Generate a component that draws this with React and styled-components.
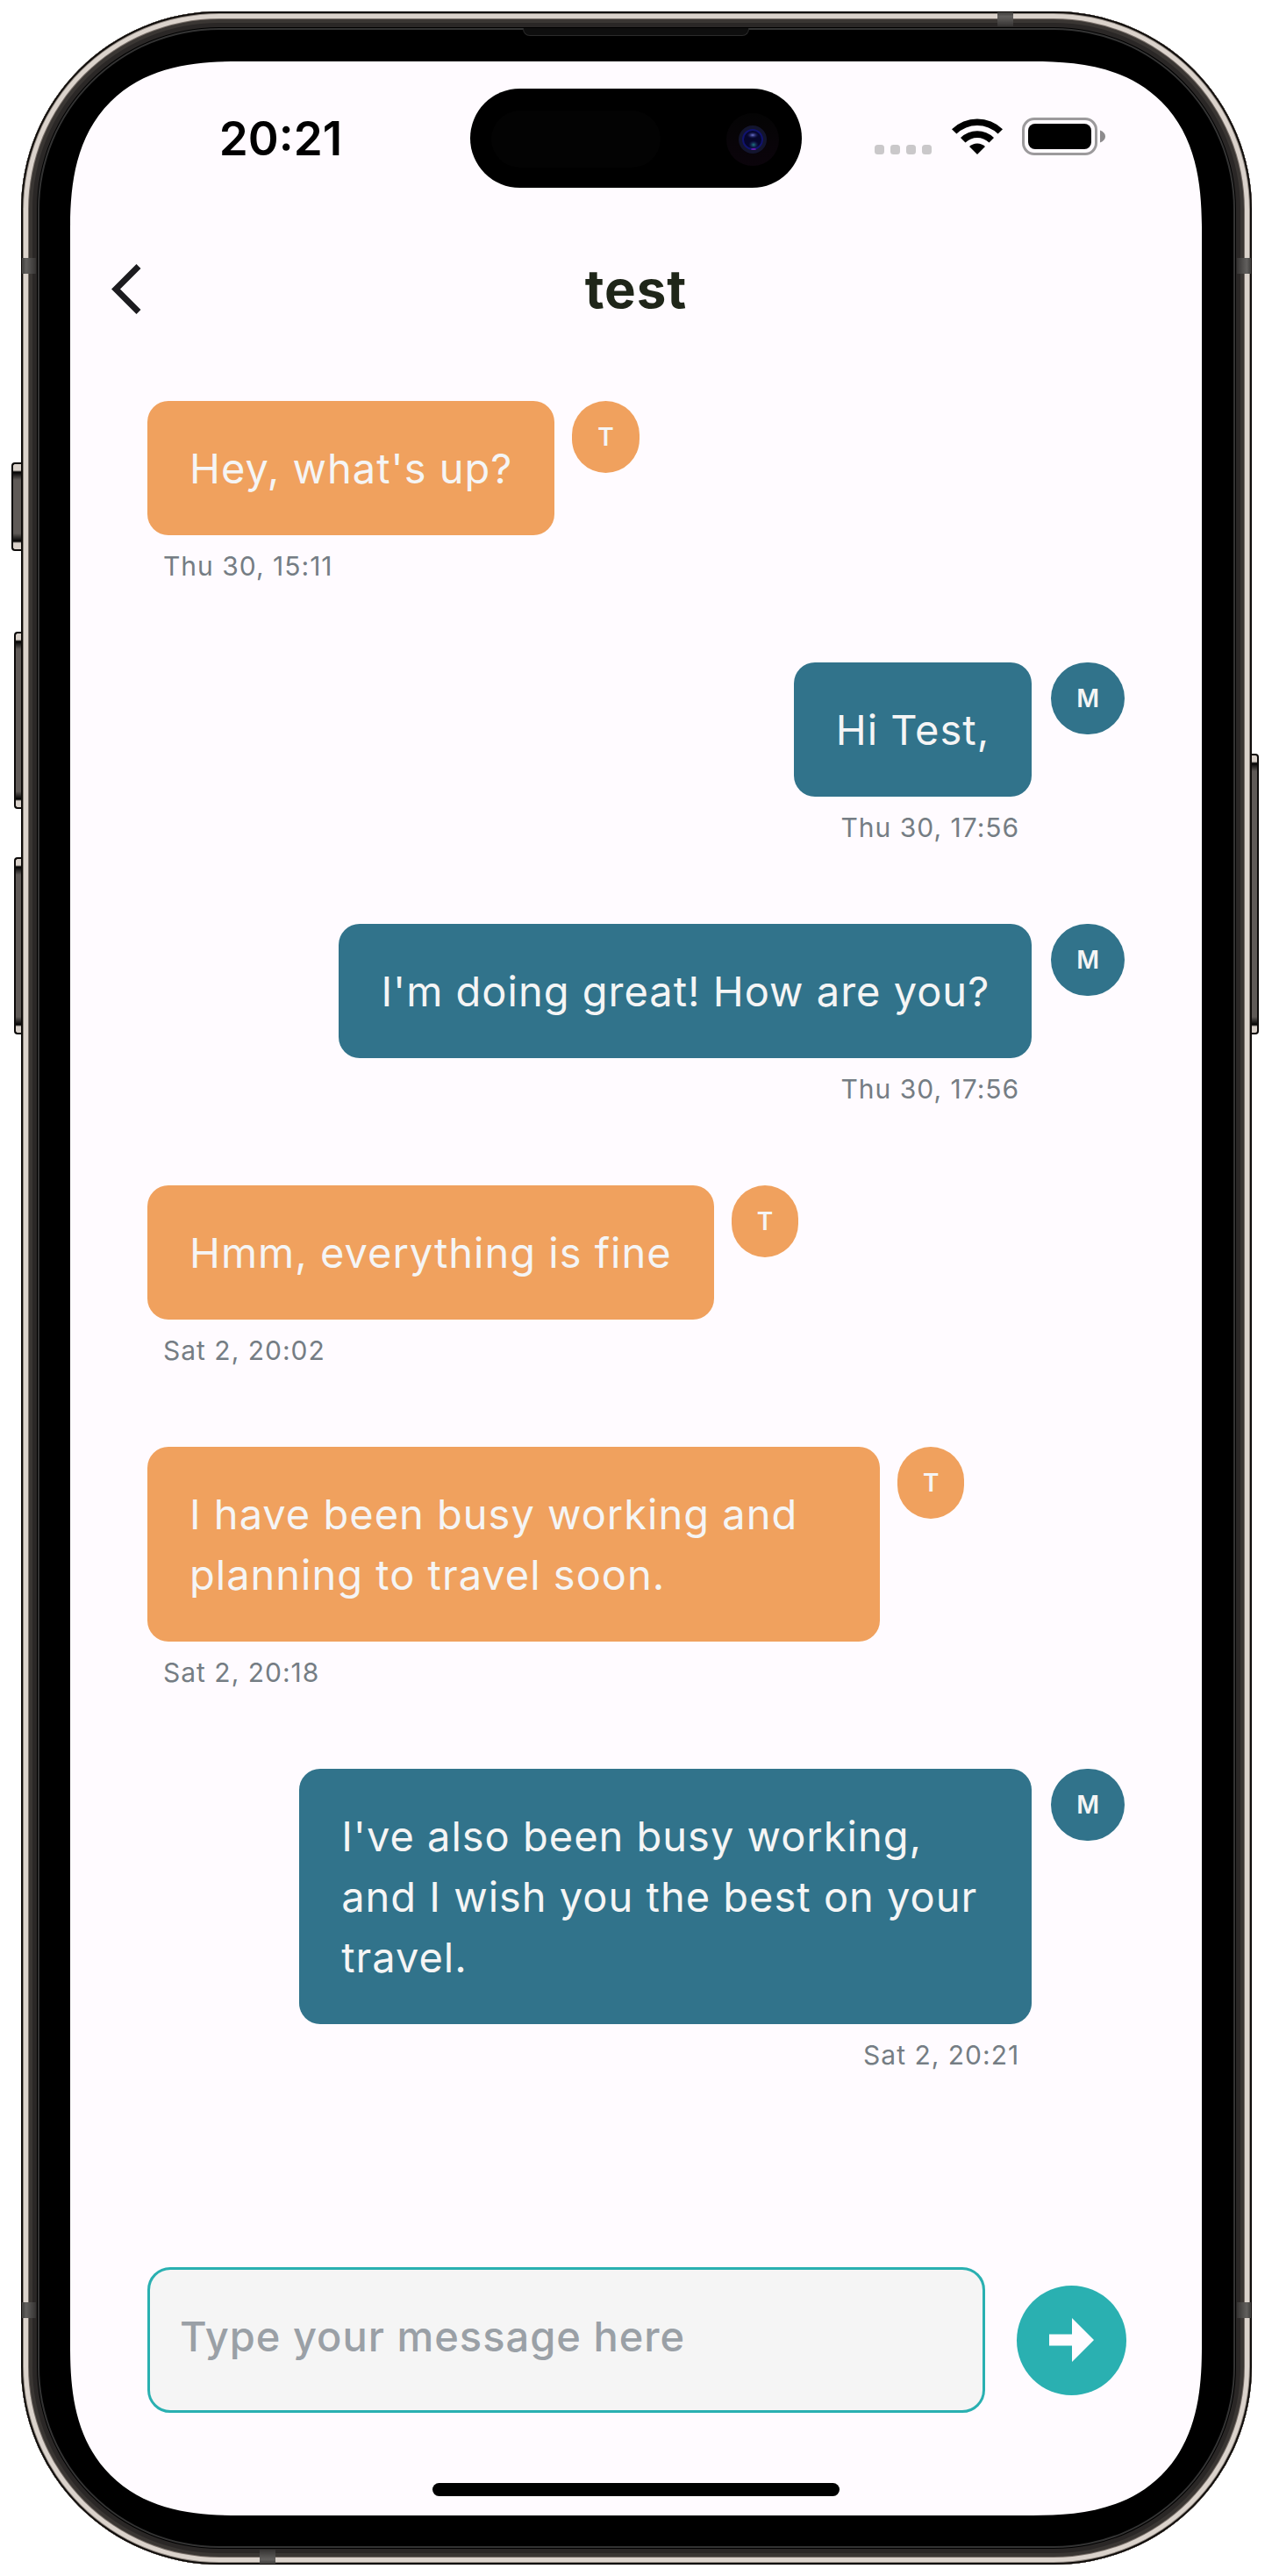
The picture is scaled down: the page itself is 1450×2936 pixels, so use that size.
import React, { useState } from "react";
import styled, { createGlobalStyle } from "styled-components";

const c = {
  screen: "#fffbff",
  orange: "#f0a15e",
  teal: "#31738b",
  accent: "#2ab0b1",
  onBubble: "#f5f5f5",
  muted: "#757d84",
  ink: "#1f2619",
};

const Global = createGlobalStyle`
  * { box-sizing: border-box; }
  body { margin: 0; background: #fff; font-family: Inter, "Liberation Sans", sans-serif; }
`;

const Page = styled.main`
  min-height: 100vh;
  display: flex;
  padding: 13px 23px 13px 24px;
`;

const Device = styled.div`
  position: relative;
  flex: 1;
  min-width: 0;
  display: flex;
  padding: 57px 57px 56px 56px;
  border-radius: 226px;
  background: #000;
  box-shadow:
    inset 0 0 0 2px #0f0c0a,
    inset 0 0 0 3px #8d857e,
    inset 0 0 0 8px #dbd3cc,
    inset 0 0 0 9px #79706a,
    inset 0 0 0 13px #3a3633,
    inset 0 0 0 18px #2a2726,
    inset 0 0 0 19px #000,
    inset 0 0 0 21px #333333;
`;

const SideKey = styled.span`
  position: absolute;
  top: ${(p) => p.$top}px;
  ${(p) => p.$side}: -${(p) => p.$depth}px;
  width: ${(p) => p.$depth}px;
  height: ${(p) => p.$length}px;
  border: 2px solid #0d0b0a;
  border-${(p) => (p.$side === "left" ? "right" : "left")}-width: 0;
  border-radius: ${(p) => (p.$side === "left" ? "4px 0 0 4px" : "0 4px 4px 0")};
  background: linear-gradient(#d9d1ca 0 7px, #000 9px, #5f5a57 18px, #5f5a57 calc(100% - 18px), #000 calc(100% - 9px), #d9d1ca calc(100% - 7px));
`;

const Antenna = styled.span`
  position: absolute;
  ${(p) => p.$edge}: 1px;
  ${(p) => p.$from}: ${(p) => p.$at}px;
  width: ${(p) => (p.$edge === "left" || p.$edge === "right" ? 16 : 18)}px;
  height: ${(p) => (p.$edge === "left" || p.$edge === "right" ? 18 : 16)}px;
  background: linear-gradient(
    to ${(p) => ({ left: "right", right: "left", top: "bottom", bottom: "top" })[p.$edge]},
    #3f3e3c, #62605e 30%, #353332
  );
`;

const Speaker = styled.span`
  position: absolute;
  top: 19px;
  left: 50%;
  width: 258px;
  height: 9px;
  margin-left: -130px;
  border: 1px solid #2b2b2b;
  border-top: 0;
  border-radius: 0 0 8px 8px;
  background: #0e0e0e;
`;

const Screen = styled.div`
  flex: 1;
  min-width: 0;
  display: flex;
  flex-direction: column;
  border-radius: 168px;
  background: ${c.screen};
  @supports (corner-shape: superellipse(1.35)) {
    border-radius: 193px;
    corner-shape: superellipse(1.35);
  }
`;

const StatusBar = styled.div`
  display: grid;
  grid-template-columns: 1fr 378px 1fr;
  align-items: center;
  padding-top: 31px;
`;

const Clock = styled.time`
  padding-left: 24px;
  text-align: center;
  font-size: 53px;
  font-weight: 600;
  line-height: 64px;
  color: #000;
`;

const Island = styled.div`
  height: 113px;
  display: flex;
  align-items: center;
  justify-content: space-between;
  padding: 2px 26px 0 24px;
  border-radius: 57px;
  background: #000;
`;

const Sensor = styled.span`
  width: 193px;
  height: 65px;
  border-radius: 33px;
  background: #030303;
`;

const Indicators = styled.div`
  display: flex;
  justify-content: center;
  padding: 0 28px 4px 0;
`;

const Header = styled.header`
  display: grid;
  grid-template-columns: 88px 1fr 88px;
  align-items: center;
  padding: 79px 28px 0;
`;

const BackButton = styled.button`
  width: 72px;
  height: 72px;
  padding: 0;
  border: 0;
  background: none;
  display: grid;
  place-items: center;
  cursor: pointer;
`;

const Title = styled.h1`
  margin: 0;
  text-align: center;
  font-size: 60px;
  font-weight: 700;
  line-height: 72px;
  letter-spacing: 1px;
  color: ${c.ink};
`;

const Thread = styled.ol`
  flex: 1;
  margin: 0;
  padding: 92px 88px 48px;
  list-style: none;
  display: flex;
  flex-direction: column;
  gap: 88px;
`;

const Message = styled.li`
  display: grid;
  grid-template-columns: ${(p) => (p.$mine ? "1fr auto" : "fit-content(75%) 1fr")};
  justify-items: ${(p) => (p.$mine ? "end" : "start")};
  align-items: start;
  column-gap: ${(p) => (p.$mine ? 22 : 20)}px;
`;

const Bubble = styled.p`
  margin: 0;
  max-width: 835px;
  padding: 42px 48px;
  border-radius: 24px;
  background: ${(p) => (p.$mine ? c.teal : c.orange)};
  color: ${c.onBubble};
  font-size: 47px;
  font-weight: 400;
  line-height: 69px;
  letter-spacing: 1px;
`;

const Avatar = styled.span`
  padding: 22px 29px;
  border-radius: 41px;
  background: ${(p) => (p.$mine ? c.teal : c.orange)};
  color: ${c.onBubble};
  font-size: 28px;
  font-weight: 600;
  line-height: 38px;
`;

const Sent = styled.time`
  grid-column: 1;
  white-space: nowrap;
  padding: 14px ${(p) => (p.$mine ? 14 : 18)}px 0;
  font-size: 30px;
  line-height: 43px;
  letter-spacing: 1px;
  color: ${c.muted};
`;

const Composer = styled.form`
  display: flex;
  align-items: center;
  gap: 36px;
  padding: 0 86px 0 88px;
`;

const Field = styled.input`
  flex: 1;
  min-width: 0;
  height: 166px;
  padding: 0 34px 10px;
  border: 3px solid ${c.accent};
  border-radius: 26px;
  outline: 0;
  background: #f5f5f5;
  color: ${c.ink};
  font-family: inherit;
  font-size: 47px;
  font-weight: 500;
  letter-spacing: 1px;
  &::placeholder { color: #9aa0a6; opacity: 1; }
`;

const SendButton = styled.button`
  flex: none;
  width: 125px;
  height: 125px;
  padding: 0;
  border: 0;
  border-radius: 50%;
  background: ${c.accent};
  display: grid;
  place-items: center;
  cursor: pointer;
`;

const HomeIndicator = styled.div`
  align-self: center;
  width: 36%;
  height: 15px;
  margin: 80px 0 22px;
  border-radius: 8px;
  background: #000;
`;

const messages = [
  { from: "T", text: "Hey, what's up?", sent: "Thu 30, 15:11" },
  { from: "M", text: "Hi Test,", sent: "Thu 30, 17:56" },
  { from: "M", text: "I'm doing great! How are you?", sent: "Thu 30, 17:56" },
  { from: "T", text: "Hmm, everything is fine", sent: "Sat 2, 20:02" },
  { from: "T", text: "I have been busy working and planning to travel soon.", sent: "Sat 2, 20:18" },
  { from: "M", text: "I've also been busy working, and I wish you the best on your travel.", sent: "Sat 2, 20:21" },
];

function Camera() {
  return (
    <svg width="60" height="60" viewBox="0 0 60 60" aria-hidden="true">
      <defs>
        <linearGradient id="halo" x1="0" y1="0" x2="0" y2="1">
          <stop offset="0" stopColor="#040404" />
          <stop offset="1" stopColor="#0b040b" />
        </linearGradient>
        <radialGradient id="glint">
          <stop offset="0" stopColor="#7079d8" />
          <stop offset="1" stopColor="#10104a" stopOpacity="0" />
        </radialGradient>
        <radialGradient id="glow">
          <stop offset="0" stopColor="#1f7f80" />
          <stop offset="1" stopColor="#1a1060" stopOpacity="0" />
        </radialGradient>
      </defs>
      <circle cx="30" cy="30" r="30" fill="url(#halo)" />
      <circle cx="30" cy="30" r="16" fill="#13152e" />
      <circle cx="30" cy="30" r="11" fill="#06062c" stroke="#10136e" strokeWidth="2" />
      <ellipse cx="30" cy="25" rx="7" ry="4" fill="url(#glint)" />
      <ellipse cx="31" cy="36" rx="6" ry="5" fill="url(#glow)" />
      <ellipse cx="31" cy="41" rx="3" ry="1" fill="#6a1bb0" />
    </svg>
  );
}

function StatusIcons() {
  return (
    <svg width="263" height="43" viewBox="0 0 263 43" role="img" aria-label="No signal, Wi-Fi, battery full">
      {[0, 18, 36, 54].map((x) => (
        <rect key={x} x={x} y="31" width="11" height="11" rx="3.5" fill="#cac8ca" />
      ))}
      <g transform="translate(88 0)">
        <path d="M0 13.2 A41.5 41.5 0 0 1 58 13.2 L52.6 18.6 A34 34 0 0 0 5.4 18.6 Z" />
        <path d="M10 23.1 A27.2 27.2 0 0 1 48 23.1 L42.5 28.5 A19.6 19.6 0 0 0 15.5 28.5 Z" />
        <path d="M20 33 A13 13 0 0 1 38 33 L29 42 Z" />
      </g>
      <rect x="169.5" y="1.5" width="83" height="40" rx="12.5" fill="none" stroke="#9c9a9c" strokeWidth="3" />
      <rect x="175" y="7" width="72" height="29" rx="8" />
      <path d="M257 14.5 C261 16 263 18.500 263 21.500 S261 27 257 28.500 Z" fill="#8d8b8d" />
    </svg>
  );
}

export default function App() {
  const [draft, setDraft] = useState("");
  return (
    <>
      <Global />
      <Page>
        <Device>
          <SideKey $side="left" $top={514} $length={101} $depth={11} />
          <SideKey $side="left" $top={707} $length={202} $depth={8} />
          <SideKey $side="left" $top={964} $length={202} $depth={8} />
          <SideKey $side="right" $top={846} $length={320} $depth={8} />
          <Antenna $edge="left" $from="top" $at={281} />
          <Antenna $edge="right" $from="top" $at={281} />
          <Antenna $edge="left" $from="bottom" $at={281} />
          <Antenna $edge="right" $from="bottom" $at={281} />
          <Antenna $edge="top" $from="right" $at={272} />
          <Antenna $edge="bottom" $from="left" $at={272} />
          <Speaker />
          <Screen>
            <StatusBar>
              <Clock>20:21</Clock>
              <Island>
                <Sensor />
                <Camera />
              </Island>
              <Indicators>
                <StatusIcons />
              </Indicators>
            </StatusBar>
            <Header>
              <BackButton type="button" aria-label="Back">
                <svg width="36" height="60" viewBox="0 0 36 60" aria-hidden="true">
                  <path d="M32 4.500 L6 30.500 L32 56.500" fill="none" stroke="#1c1b1f" strokeWidth="7" />
                </svg>
              </BackButton>
              <Title>test</Title>
            </Header>
            <Thread>
              {messages.map((m, i) => {
                const mine = m.from === "M";
                return (
                  <Message key={i} $mine={mine}>
                    <Bubble $mine={mine}>{m.text}</Bubble>
                    <Avatar $mine={mine}>{m.from}</Avatar>
                    <Sent $mine={mine}>{m.sent}</Sent>
                  </Message>
                );
              })}
            </Thread>
            <Composer onSubmit={(e) => e.preventDefault()}>
              <Field
                type="text"
                aria-label="Message"
                placeholder="Type your message here"
                value={draft}
                onChange={(e) => setDraft(e.target.value)}
              />
              <SendButton type="submit" aria-label="Send">
                <svg width="51" height="50" viewBox="0 0 51 50" aria-hidden="true">
                  <path d="M0 18.500 H26 V0 L51 25 L26 50 V31.500 H0 Z" fill="#fffbff" />
                </svg>
              </SendButton>
            </Composer>
            <HomeIndicator />
          </Screen>
        </Device>
      </Page>
    </>
  );
}
